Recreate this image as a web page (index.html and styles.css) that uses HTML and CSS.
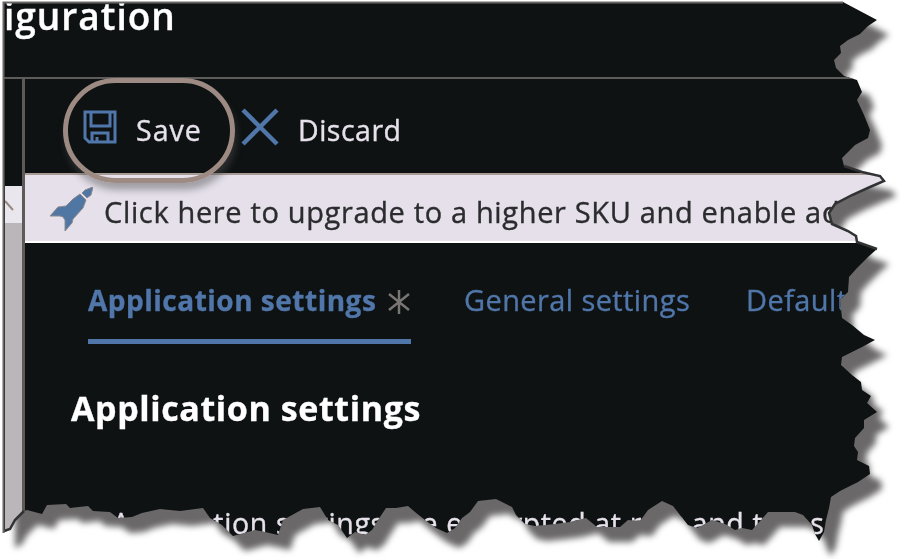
FILE: index.html
```html
<!DOCTYPE html>
<html lang="en">
<head>
<meta charset="utf-8">
<title>Configuration</title>
<link rel="stylesheet" href="styles.css">
</head>
<body>
<div class="sheet">
  <div class="torn">
    <header class="title"><span class="title-text">iguration</span></header>
    <div class="body">
      <aside class="rail">
        <div class="rail-arrow"><svg viewBox="0 0 17 38" width="17" height="38"><path d="M0 15l8 9" stroke="#978880" stroke-width="2" fill="none"/></svg></div>
        <div class="rail-track"></div>
      </aside>
      <main class="main">
        <div class="toolbar">
          <svg class="save-icon" viewBox="0 0 34 34" width="34" height="34"><path d="M2 2h30v30H6l-4-4zM8 2v14h19V2M9 32V23h16v9M14 32v-5" fill="none" stroke="#5076aa" stroke-width="3"/></svg>
          <span class="save">Save</span>
          <svg class="x-icon" viewBox="0 0 38 38" width="38" height="38"><path d="M2 2l34 34M36 2L2 36" stroke="#5076aa" stroke-width="4.500" fill="none"/></svg>
          <span class="discard">Discard</span>
          <div class="ring"></div>
        </div>
        <div class="banner">
          <svg class="rocket" viewBox="0 0 44 46" width="44" height="46"><path d="M44 0l-2 8-4 3-5-5 3-3zM31 7l6 6-3 8-10 11-1 4-7 8v-11l-2-3-3-1-10 0 8-9 8-1 7-7z" fill="#5076a4" stroke="#8d8a8e" stroke-width="1"/></svg>
          <span class="banner-text">Click here to upgrade to a higher SKU and enable ad</span>
        </div>
        <nav class="tabs">
          <div class="tab active"><span class="tab-name">Application settings</span><svg class="star" viewBox="0 0 24 24" width="24" height="24"><path d="M12 0v24M2 4l20 16M22 4L2 20" stroke="#797573" stroke-width="2.500" fill="none"/></svg></div>
          <div class="tab general">General settings</div>
          <div class="tab default">Default</div>
        </nav>
        <h2 class="heading">Application settings</h2>
        <p class="note">Application settings are encrypted at rest and trans</p>
      </main>
    </div>
  </div>
</div>
<svg class="edge" viewBox="0 0 900 559" width="900" height="559"><path d="M844 166L862 172L880 176L884 181L870 187L852 195L835 204L829 213L832 224L848 231L856 236L857 242L877 249M24 511L15 520L10 529L4 531" fill="none" stroke="#303234" stroke-width="2.5"/><path d="M3.500 533V2.500H843" fill="none" stroke="#6a6866" stroke-width="2"/></svg>
</body>
</html>
```

FILE: styles.css
```css
* { box-sizing: border-box; }
body {
  margin: 0;
  width: 900px;
  height: 559px;
  overflow: hidden;
  background: #fff;
  font-family: "Open Sans", "Noto Sans", sans-serif;
  color: #e6e1ea;
  -webkit-text-stroke: .35px currentColor;
}
.sheet { height: 559px; padding: 2px 0 0 3px; filter: drop-shadow(12px 15px 3px #6a6868); }
.torn {
  width: 897px;
  height: 557px;
  margin: 0;
  background: #0e1212;
  display: flex;
  flex-direction: column;
  overflow: hidden;
  clip-path: polygon(0px 0px,840px 0px,874px 18px,865px 24px,857px 32px,845px 38px,837px 44px,838px 51px,831px 58px,833px 66px,841px 74px,854px 78px,859px 90px,854px 98px,861px 113px,867px 128px,865px 136px,852px 143px,839px 156px,841px 164px,859px 170px,877px 174px,881px 179px,867px 185px,849px 193px,832px 202px,826px 211px,829px 222px,845px 230px,853px 235px,854px 240px,874px 247px,865px 255px,854px 266px,846px 275px,845px 290px,837px 298px,839px 316px,849px 323px,861px 333px,872px 338px,859px 345px,839px 355px,838px 363px,849px 373px,858px 380px,859px 388px,868px 394px,864px 401px,874px 410px,861px 418px,861px 426px,852px 436px,851px 444px,855px 450px,854px 458px,866px 464px,867px 472px,855px 480px,837px 489px,828px 495px,826px 506px,823px 518px,821px 530px,816px 539px,812px 532px,809px 523px,800px 513px,792px 510px,765px 510px,758px 518px,749px 528px,739px 526px,732px 528px,722px 522px,709px 518px,700px 523px,694px 526px,685px 523px,677px 513px,670px 504px,659px 499px,645px 508px,637px 519px,625px 518px,617px 525px,594px 525px,583px 516px,567px 520px,552px 522px,532px 524px,522px 522px,513px 513px,509px 505px,493px 497px,475px 499px,467px 510px,459px 516px,452px 526px,444px 531px,433px 526px,422px 518px,412px 510px,405px 504px,393px 506px,383px 506px,375px 518px,369px 528px,362px 533px,352px 530px,344px 536px,335px 523px,325px 518px,317px 505px,300px 507px,280px 518px,275px 533px,262px 530px,252px 528px,230px 534px,219px 523px,207px 516px,200px 506px,177px 509px,157px 507px,139px 511px,129px 515px,115px 516px,107px 510px,90px 509px,85px 504px,67px 506px,63px 502px,44px 503px,39px 512px,24px 508px,21px 509px,12px 518px,7px 527px,0px 531px);
}
.title {
  flex: 0 0 77px;
  border-bottom: 2px solid #5d5c5b;
  display: flex;
  overflow: hidden;
}
.title-text {
  margin: -10px 0 0 1px;
  font-size: 37px;
  letter-spacing: 1px;
  line-height: 48px;
  font-weight: 600;
  color: #fff;
  white-space: nowrap;
}
.body { flex: 1; display: flex; min-height: 0; }
.rail { flex: 0 0 22px; border-right: 3px solid #5f5a58; padding: 107px 0 0 2px; display: flex; flex-direction: column; }
.rail-arrow { height: 37px; background: #eae6ee; overflow: hidden; }
.rail-track { flex: 1; background: #bbb6ba; }
.main { flex: 1; min-width: 0; }
.toolbar { position: relative; height: 94px; display: flex; }
.save-icon { margin: 31px 0 0 58px; flex: none; }
.save, .discard { margin: 31px 0 0 19px; font-size: 28.5px; letter-spacing: .5px; line-height: 40px; white-space: nowrap; }
.save { width: 66px; letter-spacing: 1px; }
.x-icon { margin: 29px 0 0 39px; flex: none; }
.ring {
  position: absolute;
  left: 38px;
  top: -1px;
  width: 172px;
  height: 105px;
  border: 5px solid #9d8b83;
  border-radius: 53px;
  box-shadow: 2px 7px 7px rgba(80, 78, 80, .45);
}
.banner {
  height: 70px;
  background: #e5e0ea;
  border-top: 2px solid #a79b96;
  border-bottom: 2px solid #fff;
  display: flex;
  color: #2b2c2e;
}
.rocket { margin: 12px 0 0 24px; flex: none; }
.banner-text { margin: 17px 0 0 11px; font-size: 29px; letter-spacing: .65px; line-height: 40px; white-space: nowrap; }
.tabs { display: flex; padding: 36px 0 0 63px; height: 101px; font-size: 29px; letter-spacing: .4px; line-height: 42px; color: #5076aa; white-space: nowrap; }
.tab { flex: none; height: 65px; }
.active { width: 323px; border-bottom: 5px solid #5076aa; display: flex; font-size: 28px; letter-spacing: .5px; font-weight: 700; }
.tab-name { width: 299px; }
.star { flex: none; margin-top: 11px; }
.general { margin-left: 53px; width: 228px; }
.default { margin-left: 54px; }
.heading { margin: 37px 0 0 46px; font-size: 34px; letter-spacing: .6px; line-height: 55px; font-weight: 700; color: #fff; white-space: nowrap; }
.note { margin: 67px 0 0 87px; font-size: 28.5px; letter-spacing: .65px; line-height: 40px; white-space: nowrap; }
.edge { position: absolute; left: 0; top: 0; pointer-events: none; }
```
